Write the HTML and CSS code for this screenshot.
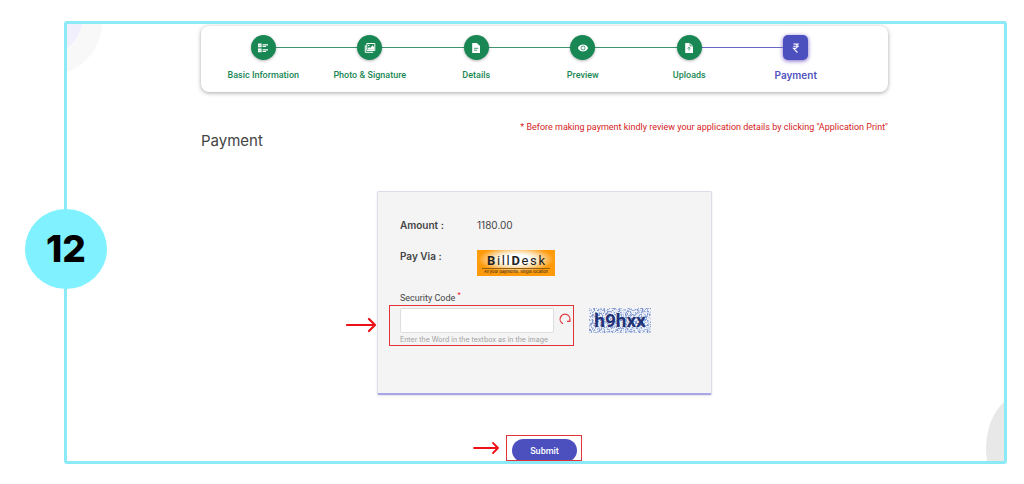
FILE: index.html
```html
<!DOCTYPE html>
<html lang="en">
<head>
<meta charset="utf-8">
<title>Payment</title>
<link rel="stylesheet" href="styles.css">
</head>
<body>
<div class="frame">
  <div class="viewport">
    <span class="corner corner-outer"></span>
    <span class="corner corner-inner"></span>
    <span class="corner corner-bottom"></span>
    <main class="page">
      <ol class="stepper">
        <li class="step">
          <span class="dot"><svg viewBox="0 0 12 12"><path d="M1 1.6h3.6v3.6H1zM1 6.6h3.6v3.6H1zM5.6 2.2H11v1.200H5.6zM5.6 4H9v1H5.6zM5.6 7.2H11v1.200H5.6zM5.6 9H9v1H5.6z" fill="#fff"/><path d="M1.8 3.4l.7.7 1.3-1.4M1.8 8.4l.7.7 1.3-1.4" stroke="#198754" stroke-width=".4" fill="none"/></svg></span>
          <span class="label">Basic Information</span>
        </li>
        <li class="step">
          <span class="dot"><svg viewBox="0 0 12 12"><path d="M2.8 1.5h8v7h-8z" fill="none" stroke="#fff" stroke-width="1"/><path d="M1.3 3.3v7h7.9" fill="none" stroke="#fff" stroke-width="1"/><path d="M3.6 7.7V6.4l1.5-1.3 1 .9 2.5-2.8 1.5 2v2.5z" fill="#fff"/><circle cx="4.7" cy="3.5" r=".8" fill="#fff"/></svg></span>
          <span class="label">Photo &amp; Signature</span>
        </li>
        <li class="step">
          <span class="dot"><svg viewBox="0 0 12 12"><path d="M2.8 1h4.1L10 4v7H2.8a.6.6 0 0 1-.6-.6V1.6a.6.6 0 0 1 .6-.6z" fill="#fff"/><path d="M4 6.3h4.2M4 8.2h3" stroke="#198754" stroke-width=".8"/></svg></span>
          <span class="label">Details</span>
        </li>
        <li class="step">
          <span class="dot"><svg viewBox="0 0 12 12"><path d="M.8 6C2 3.6 3.8 2.5 6 2.5S10 3.6 11.2 6C10 8.4 8.2 9.5 6 9.5S2 8.4.8 6z" fill="#fff"/><circle cx="6" cy="6" r="2" fill="none" stroke="#198754" stroke-width=".7"/></svg></span>
          <span class="label">Preview</span>
        </li>
        <li class="step step-last-done">
          <span class="dot"><svg viewBox="0 0 12 12"><path d="M2.8 1h4.1L10 4v7H2.8a.6.6 0 0 1-.6-.6V1.6a.6.6 0 0 1 .6-.6z" fill="#fff"/><path d="M7 1v3h3M6 8.600V5.2M4.700 6.600L6 5.200 7.300 6.600" fill="none" stroke="#198754" stroke-width=".7"/></svg></span>
          <span class="label">Uploads</span>
        </li>
        <li class="step step-current" aria-current="step">
          <span class="dot"><svg viewBox="0 0 12 12"><path d="M3.3 2h5.6M3.3 4.2h5.6M3.3 2h1.6c3.2 0 3.2 4.4 0 4.4H3.5L7.4 10.5" fill="none" stroke="#fff" stroke-width="1.1"/></svg></span>
          <span class="label">Payment</span>
        </li>
      </ol>

      <header class="heading">
        <h1>Payment</h1>
        <p>* Before making payment kindly review your application details by clicking "Application Print"</p>
      </header>

      <form class="form">
        <section class="card">
          <dl class="facts">
            <dt>Amount :</dt>
            <dd>1180.00</dd>
            <dt>Pay Via :</dt>
            <dd>
              <div class="billdesk">
                <span class="brand"><b>B</b><i>i</i><i>l</i><i>l</i><b>D</b><i>e</i><i>s</i><i>k</i></span>
                <small>All your payments. Single location</small>
              </div>
            </dd>
          </dl>
          <label class="code-label" for="code">Security Code <sup>*</sup></label>
          <div class="code-row">
            <div class="code-field">
              <input id="code" type="text" aria-describedby="code-help">
              <button class="reload" type="button" aria-label="Reload code"><svg viewBox="0 0 12 12"><path d="M4 10.600A4.900 4.900 0 1 1 10.600 7.800M8 8.300h2.900V5.600" fill="none" stroke="#e0383c" stroke-width="1.2"/></svg></button>
              <span class="mark mark-code"></span>
              <svg class="arrow arrow-code" viewBox="0 0 32 16"><path d="M1 8h28M23 2l6 6-6 6" fill="none" stroke="#ee1018" stroke-width="2.2" stroke-linecap="round" stroke-linejoin="round"/></svg>
            </div>
            <svg class="captcha" viewBox="0 0 62 25">
              <defs>
                <filter id="grain" x="0" y="0" width="100%" height="100%">
                  <feTurbulence type="fractalNoise" baseFrequency="0.6" numOctaves="2" seed="4"/>
                  <feColorMatrix values="0 0 0 0 .22  0 0 0 0 .32  0 0 0 0 .62  5 0 0 0 -2.2"/>
                </filter>
              </defs>
              <rect width="62" height="25" fill="#f1f3fa"/>
              <rect width="62" height="25" filter="url(#grain)"/>
              <text x="31" y="19" text-anchor="middle">h9hxx</text>
            </svg>
          </div>
          <p class="help" id="code-help">Enter the Word in the textbox as in the image</p>
        </section>
        <div class="actions">
          <button class="submit" type="submit">Submit</button>
          <span class="mark mark-submit"></span>
          <svg class="arrow arrow-submit" viewBox="0 0 28 14"><path d="M1 7h24M20 2l5 5-5 5" fill="none" stroke="#ee1018" stroke-width="1.8" stroke-linecap="round" stroke-linejoin="round"/></svg>
        </div>
      </form>
    </main>
  </div>
  <div class="badge">12</div>
</div>
</body>
</html>
```
FILE: styles.css
```css
* { box-sizing: border-box; }
body {
  margin: 0;
  padding: 21px 17px 21px 64px;
  background: #fff;
  color: #444;
  font-family: Inter, "Liberation Sans", sans-serif;
  font-size: 10px;
  line-height: 12px;
}
h1, p, dl, dd, ol { margin: 0; padding: 0; }
button { font: inherit; border: 0; padding: 0; }

.frame { position: relative; border: 3px solid #8ceaf6; border-radius: 3px; }
.viewport { position: relative; overflow: hidden; padding: 2px 0 0 18px; }
.badge {
  position: absolute;
  left: -42px;
  top: 50%;
  width: 82px;
  height: 80px;
  margin-top: -34px;
  border-radius: 50%;
  background: #80f2ff;
  color: #000;
  font-size: 37px;
  font-weight: 800;
  line-height: 80px;
  text-align: center;
}

.corner { position: absolute; border-radius: 50%; }
.corner-outer { left: -70px; top: -54px; width: 105px; height: 105px; background: #f8f8f9; }
.corner-inner { left: -64px; top: -48px; width: 80px; height: 80px; background: #f0effb; }
.corner-bottom { right: -62px; bottom: -42px; width: 80px; height: 110px; background: #e9e8e9; }

.page { position: relative; max-width: 687px; margin: 0 auto; }

.stepper {
  display: grid;
  grid-template-columns: repeat(6, 1fr);
  padding: 9px 39px 11px 9px;
  border-radius: 8px;
  background: #fff;
  box-shadow: 0 1px 4px rgba(0, 0, 0, .35);
  list-style: none;
}
.step {
  position: relative;
  display: flex;
  flex-direction: column;
  align-items: center;
  gap: 9px;
  color: #198754;
  font-family: Roboto, sans-serif;
  font-size: 9px;
  font-weight: 500;
  white-space: nowrap;
}
.step:not(:last-child)::after {
  content: "";
  position: absolute;
  left: 50%;
  top: 12px;
  width: 100%;
  height: 1px;
  background: #3f9570;
}
.step-last-done:not(:last-child)::after { background: #6a67c4; }
.dot {
  position: relative;
  z-index: 1;
  display: grid;
  place-items: center;
  width: 25px;
  height: 25px;
  border-radius: 50%;
  background: #198754;
  box-shadow: 0 1px 3px rgba(0, 0, 0, .3);
}
.dot svg { width: 12px; height: 12px; }
.step-current { color: #4f52bd; font-family: Inter, sans-serif; font-size: 10px; font-weight: 600; }
.step-current .dot { border-radius: 5px; background: #4c50bf; box-shadow: 0 1px 4px #7b62c8; }

.heading { display: flex; justify-content: space-between; padding-top: 29px; }
.heading h1 { padding-top: 10px; color: #444; font-size: 15px; font-weight: 400; line-height: 20px; }
.heading p { color: #d41c24; font-family: Roboto, sans-serif; font-size: 9px; }

.form { display: flex; flex-direction: column; align-items: center; padding-top: 40px; }
.card {
  width: 335px;
  padding: 27px 22px 47px;
  border: 1px solid #dcdcec;
  border-bottom: 2px solid #aaa6e6;
  border-radius: 2px;
  background: #f4f4f4;
  box-shadow: 0 1px 2px rgba(60, 60, 120, .15);
}
.facts { display: grid; grid-template-columns: 77px 1fr; row-gap: 19px; }
.facts dt { font-weight: 600; }
.billdesk {
  display: flex;
  flex-direction: column;
  align-items: center;
  width: 78px;
  height: 26px;
  padding: 4px 4px 0;
  background: radial-gradient(ellipse 38px 13px at 50% 36%, #fff 35%, #fbe2b8 60%, #ff9a0a 100%);
  color: #222;
}
.brand {
  display: flex;
  justify-content: space-between;
  width: 58px;
  font-family: Roboto, sans-serif;
  font-size: 13px;
  line-height: 14px;
}
.brand i { font-style: normal; }
.billdesk small {
  width: 68px;
  border-top: 1px solid #94600f;
  font-size: 4px;
  line-height: 6px;
  text-align: center;
  white-space: nowrap;
}
.code-label { display: block; margin-top: 16px; font-family: Roboto, sans-serif; font-size: 9px; line-height: 12px; }
.code-label sup { color: #ee1018; line-height: 0; }
.code-row { display: flex; gap: 18px; padding-top: 4px; }
.code-field { position: relative; display: flex; gap: 5px; }
.code-field input {
  width: 154px;
  height: 25px;
  padding: 0 6px;
  border: 1px solid #dedede;
  border-radius: 2px;
  background: #fff;
  font: inherit;
}
.reload { align-self: flex-start; width: 12px; height: 22px; background: none; }
.reload svg { display: block; width: 12px; height: 12px; }
.captcha { width: 62px; height: 25px; }
.captcha text { fill: #1f3276; font: 700 19px Roboto, sans-serif; }
.help { color: #a2a2a2; font-size: 7px; line-height: 13px; }

.mark { position: absolute; border: 1px solid #e0343a; pointer-events: none; }
.mark-code { left: -11px; top: -3px; width: 185px; height: 41px; }
.arrow { position: absolute; }
.arrow-code { left: -54px; top: 9px; width: 32px; height: 16px; }

.actions { position: relative; height: 66px; padding-top: 44px; }
.submit {
  width: 65px;
  height: 23px;
  border-radius: 12px;
  background: #4c50bf;
  color: #fff;
  font-family: Roboto, sans-serif;
  font-size: 9px;
  font-weight: 500;
}
.mark-submit { left: -6px; top: 40px; width: 76px; height: 26px; }
.arrow-submit { left: -39px; top: 46px; width: 28px; height: 14px; }
```
